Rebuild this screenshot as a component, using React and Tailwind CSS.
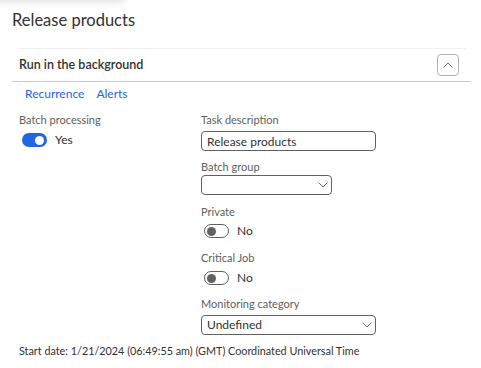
import { useState } from "react";

function Toggle({ on, label, onClick }) {
  return (
    <button onClick={onClick} className="flex h-4 items-center pl-[3px] text-[12px] text-[#323130]">
      {on ? (
        <span className="flex h-[14px] w-[25px] items-center justify-end rounded-full bg-[#2266e3] pr-[3px]">
          <span className="h-[9px] w-[9px] rounded-full bg-white" />
        </span>
      ) : (
        <span className="flex h-[14px] w-[25px] items-center rounded-full border border-[#616161] pl-[2px]">
          <span className="h-[9px] w-[9px] rounded-full bg-[#616161]" />
        </span>
      )}
      <span className="ml-2">{label}</span>
    </button>
  );
}

function Chevron({ up }) {
  return (
    <svg width="10" height="6" viewBox="0 0 10 6" fill="none">
      <path
        d={up ? "M0.5 5.5L5 1l4.5 4.5" : "M0.5 0.5L5 5l4.5-4.5"}
        stroke="#605e5c"
        strokeWidth="0.9"
      />
    </svg>
  );
}

function Label({ children, className = "" }) {
  return <div className={"h-4 text-[11px] leading-4 text-[#605e5c] " + className}>{children}</div>;
}

export default function App() {
  const [batch, setBatch] = useState(true);
  const [priv, setPriv] = useState(false);
  const [critical, setCritical] = useState(false);

  return (
    <div
      className="relative h-[368px] w-[481px] overflow-hidden bg-white"
      style={{ fontFamily: "Lato, 'Open Sans', sans-serif" }}
    >
      {/* shadow left over from the bar above */}
      <div className="absolute left-[-10px] top-[-8px] h-[11px] w-[135px] rounded-full bg-black/10 blur-[3px]" />

      <h1 className="box-content h-[24px] pl-3 pt-[8px] text-[16.5px] leading-[24px] text-[#323130]">
        Release products
      </h1>

      <div className="ml-3 mt-[16px] w-[459px]">
        <div className="mx-[5px] border-t border-[#f0f0f0]" />
        <div className="flex h-[33px] items-center justify-between border-b border-[#c8c8c8] pl-[7px] pr-[12px]">
          <span className="text-[12.5px] font-semibold text-[#323130]">Run in the background</span>
          <button className="flex h-[22px] w-[22px] items-center justify-center rounded-[4px] border border-[#b3b3b3]">
            <Chevron up />
          </button>
        </div>

        <div className="flex h-[24px] items-center gap-3 pl-[13px] text-[12px] text-[#2266e3]">
          <a>Recurrence</a>
          <a>Alerts</a>
        </div>

        <div className="mt-[6px] flex pl-[7px]">
          <div className="w-[182px]">
            <Label>Batch processing</Label>
            <div className="mt-[4px]">
              <Toggle on={batch} label={batch ? "Yes" : "No"} onClick={() => setBatch(!batch)} />
            </div>
          </div>

          <div className="flex flex-col">
            <Label>Task description</Label>
            <input
              defaultValue="Release products"
              className="mt-[3px] h-[20px] w-[175px] rounded-[4px] border border-[#616161] px-[5px] text-[12px] text-[#323130] outline-none"
            />

            <Label className="mt-[8px]">Batch group</Label>
            <div className="flex h-[20px] w-[131px] items-center justify-end rounded-[4px] border border-[#616161] pr-[3px]">
              <Chevron />
            </div>

            <Label className="mt-[9px]">Private</Label>
            <div className="mt-[3px]">
              <Toggle on={priv} label={priv ? "Yes" : "No"} onClick={() => setPriv(!priv)} />
            </div>

            <Label className="mt-[11px]">Critical Job</Label>
            <div className="mt-[4px]">
              <Toggle on={critical} label={critical ? "Yes" : "No"} onClick={() => setCritical(!critical)} />
            </div>

            <Label className="mt-[10px]">Monitoring category</Label>
            <div className="mt-[3px] flex h-[20px] w-[175px] items-center justify-between rounded-[4px] border border-[#616161] pl-[5px] pr-[3px] text-[12px] text-[#323130]">
              <span>Undefined</span>
              <Chevron />
            </div>
          </div>
        </div>

        <div className="mt-[8px] h-4 pl-[7px] text-[10.8px] leading-4 text-[#323130]">
          Start date: 1/21/2024 (06:49:55 am) (GMT) Coordinated Universal Time
        </div>
      </div>
    </div>
  );
}
